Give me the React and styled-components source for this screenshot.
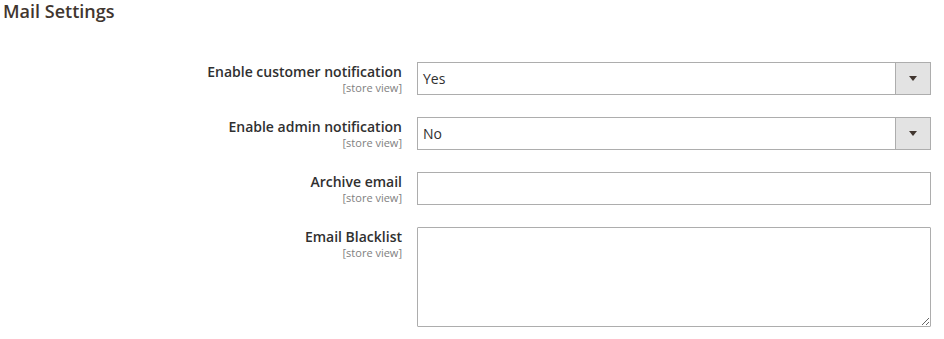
import styled, { createGlobalStyle } from 'styled-components';

const GlobalStyle = createGlobalStyle`
  body {
    margin: 0;
    background: #ffffff;
    font-family: "Open Sans", "Liberation Sans", sans-serif;
    color: #303030;
  }
`;

const Page = styled.div`
  width: 944px;
  padding: 0 13px 0 3px;
  box-sizing: border-box;
`;

const Title = styled.h2`
  margin: 0;
  font-size: 18px;
  line-height: 22px;
  font-weight: 600;
  color: #41362f;
`;

const Form = styled.div`
  display: flex;
  flex-direction: column;
  gap: 22px;
  margin-top: 40px;
`;

const Row = styled.div`
  display: grid;
  grid-template-columns: 399px 514px;
  column-gap: 15px;
  align-items: start;
`;

const LabelBox = styled.div`
  text-align: right;
  padding-top: 1px;
`;

const Label = styled.div`
  font-size: 14px;
  line-height: 18px;
  font-weight: 600;
  color: #303030;
`;

const Scope = styled.div`
  font-size: 11px;
  line-height: 13px;
  color: #808080;
`;

const SelectBox = styled.div`
  display: flex;
  height: 33px;
  border: 1px solid #adadad;
  box-sizing: border-box;
  background: #fff;
`;

const SelectValue = styled.div`
  flex: 1;
  padding: 0 5px;
  font-size: 14px;
  line-height: 31px;
  color: #303030;
`;

const Arrow = styled.div`
  width: 34px;
  border-left: 1px solid #adadad;
  background: #e3e3e3;
  display: flex;
  align-items: center;
  justify-content: center;
  &::after {
    content: '';
    border-left: 4px solid transparent;
    border-right: 4px solid transparent;
    border-top: 5px solid #41362f;
  }
`;

const Input = styled.input`
  height: 33px;
  border: 1px solid #adadad;
  box-sizing: border-box;
  margin: 0;
  padding: 0 8px;
  font: 14px "Open Sans", sans-serif;
  outline: none;
`;

const TextArea = styled.textarea`
  height: 100px;
  border: 1px solid #adadad;
  border-radius: 1px;
  box-sizing: border-box;
  margin: 0;
  padding: 6px 8px;
  font: 14px "Open Sans", sans-serif;
  outline: none;
  resize: vertical;
`;

const Field = ({ label, children }) => (
  <Row>
    <LabelBox>
      <Label>{label}</Label>
      <Scope>[store view]</Scope>
    </LabelBox>
    {children}
  </Row>
);

const Select = ({ value }) => (
  <SelectBox>
    <SelectValue>{value}</SelectValue>
    <Arrow />
  </SelectBox>
);

const App = () => (
  <Page>
    <GlobalStyle />
    <Title>Mail Settings</Title>
    <Form>
      <Field label="Enable customer notification">
        <Select value="Yes" />
      </Field>
      <Field label="Enable admin notification">
        <Select value="No" />
      </Field>
      <Field label="Archive email">
        <Input />
      </Field>
      <Field label="Email Blacklist">
        <TextArea />
      </Field>
    </Form>
  </Page>
);

export default App;
